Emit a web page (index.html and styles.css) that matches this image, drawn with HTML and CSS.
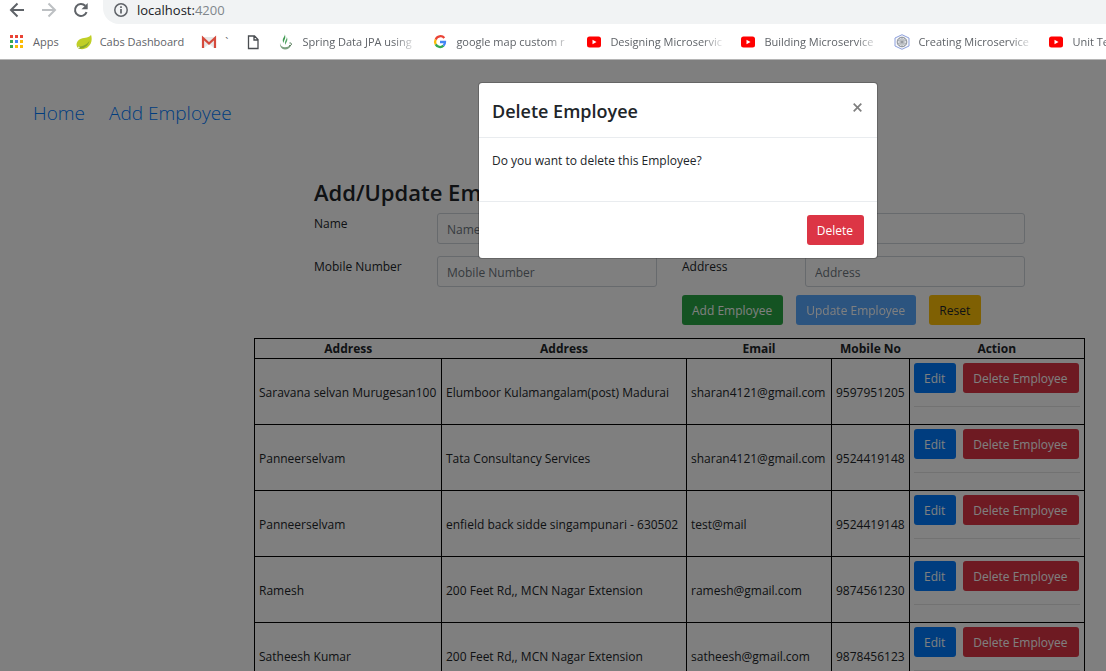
FILE: index.html
```html
<!DOCTYPE html>
<html lang="en">
<head>
<meta charset="utf-8">
<title>Employee Management</title>
<link rel="stylesheet" href="styles.css">
</head>
<body>
<svg class="sprite" aria-hidden="true">
  <symbol id="youtube" viewBox="0 0 16 16"><rect x="1" y="2.500" width="14" height="11" rx="2.500" fill="#f00"/><path d="M6.500 5.800v4.400l4-2.200z" fill="#fff"/></symbol>
</svg>
<div class="browser">
  <header>
    <div class="toolbar">
      <button class="tool" aria-label="Back"><svg width="16" height="16" viewBox="0 0 16 16"><path d="M15 8H2.500M8.500 1.500 2 8l6.500 6.500" fill="none" stroke="#5f6368" stroke-width="2"/></svg></button>
      <button class="tool" aria-label="Forward"><svg width="16" height="16" viewBox="0 0 16 16"><path d="M1 8h12.500M7.500 1.500 14 8l-6.500 6.500" fill="none" stroke="#bdc0c3" stroke-width="2"/></svg></button>
      <button class="tool" aria-label="Reload"><svg width="16" height="16" viewBox="0 0 16 16"><path d="M13.600 10.200A6 6 0 1 1 12.300 3.800" fill="none" stroke="#5f6368" stroke-width="2"/><path d="M14.700 1v6.200H8.500z" fill="#5f6368"/></svg></button>
      <div class="address">
        <svg width="14" height="14" viewBox="0 0 14 14"><circle cx="7" cy="7" r="6.200" fill="none" stroke="#5f6368" stroke-width="1.500"/><path d="M7 6v4.500M7 3.300v1.600" stroke="#5f6368" stroke-width="1.700"/></svg>
        <span class="url">localhost:<span class="port">4200</span></span>
      </div>
    </div>
    <nav class="bookmarks" aria-label="Bookmarks">
      <a class="bookmark" href="#"><svg viewBox="0 0 16 16"><path d="M1 1h3v3H1zM6 1h3v3H6zM11 1h3v3h-3z" fill="#ea4335"/><path d="M1 6h3v3H1zM1 11h3v3H1z" fill="#34a853"/><path d="M6 6h3v3H6z" fill="#4285f4"/><path d="M11 6h3v3h-3zM6 11h3v3H6zM11 11h3v3h-3z" fill="#fbbc05"/></svg><span>Apps</span></a>
      <a class="bookmark" href="#"><svg viewBox="0 0 16 16"><path d="M15 .8C13.500 4 9 3.300 5 4.800.5 6.600-.5 11 1.500 13.500 4 16 9 15.500 12 13c3.500-3 4.500-7.500 3-12.200z" fill="#c0cf26"/><path d="M1.500 12.500C6 12.800 11 11 13.500 6.500 12.500 12.500 7 15 2.500 14.800z" fill="#86a72d"/><circle cx="2.700" cy="13.500" r="1" fill="#eef3d5"/></svg><span>Cabs Dashboard</span></a>
      <a class="bookmark" href="#"><svg viewBox="0 0 16 16"><path d="M1 3h14v11H1z" fill="#e8e8e8"/><path d="M3 14l5-4 5 4z" fill="#fff"/><path d="M2 14V4l6 5.500L14 4v10" fill="none" stroke="#d54b3d" stroke-width="2.200"/></svg><span>`</span></a>
      <a class="bookmark" href="#" aria-label="Untitled page"><svg viewBox="0 0 16 16"><path d="M3.500 2h6l3.500 3.500V14.500H3.500zM9 2v4h4" fill="#fff" stroke="#4a4d51" stroke-width="1.300"/></svg></a>
      <a class="bookmark" href="#"><svg viewBox="0 0 16 16"><path d="M2 9c.3 3 2.500 4.200 5 4.200 2.300 0 3.800-.7 4.700-2.200l1.300.2c-.8 2.600-3 4.300-6 4.300C3.800 15.500 1.500 12.500 2 9z" fill="#7da181"/><path d="M6.800.3C7.300 3 3 4.500 5.600 9.300 5.400 6.500 8.500 4.500 6.800.3z" fill="#3f9a52"/><path d="M8.800 3C9 5.500 6 7 7.300 11 8 8.500 10.400 6.500 8.800 3z" fill="#57a868"/><path d="M11.500 9c3-.4 2.500 2.600-.5 3" fill="none" stroke="#49734e"/></svg><span class="clipped">Spring Data JPA using</span></a>
      <a class="bookmark" href="#"><svg viewBox="0 0 16 16"><path d="M12.300 4A5 5 0 0 0 3.700 5.600" fill="none" stroke="#ea4335" stroke-width="2.300"/><path d="M3.700 5.600a5 5 0 0 0 0 4.800" fill="none" stroke="#fbbc05" stroke-width="2.300"/><path d="M3.700 10.400A5 5 0 0 0 11.500 11.700" fill="none" stroke="#34a853" stroke-width="2.300"/><path d="M8 8h5a5 5 0 0 1-1.500 3.700" fill="none" stroke="#4285f4" stroke-width="2.300"/></svg><span class="clipped">google map custom r</span></a>
      <a class="bookmark" href="#"><svg><use href="#youtube"/></svg><span class="clipped">Designing Microservic</span></a>
      <a class="bookmark" href="#"><svg><use href="#youtube"/></svg><span class="clipped">Building Microservice</span></a>
      <a class="bookmark" href="#"><svg viewBox="0 0 16 16"><path d="M8 .7 15 4v8L8 15.300 1 12V4z" fill="#f6f7fa" stroke="#8da0dc"/><circle cx="8" cy="8" r="4.800" fill="#dcdee1" stroke="#8b9097"/><path d="M8 3v10M3.500 6l9 4M3.500 10l9-4M5 4l3 4 3-4M5 12l3-4 3 4" stroke="#8b9097" stroke-width=".6" fill="none"/></svg><span class="clipped">Creating Microservice</span></a>
      <a class="bookmark" href="#"><svg><use href="#youtube"/></svg><span class="clipped">Unit Te</span></a>
    </nav>
  </header>
  <div class="page">
    <nav class="menu"><a href="#">Home</a><a href="#">Add Employee</a></nav>
    <main>
      <form class="editor">
        <h1>Add/Update Employee</h1>
        <div class="fields">
          <label for="name">Name</label><input id="name" placeholder="Name">
          <label for="email">Email</label><input id="email" type="email" placeholder="Email">
          <label for="mobile">Mobile Number</label><input id="mobile" placeholder="Mobile Number">
          <label for="address">Address</label><input id="address" placeholder="Address">
          <div class="form-actions">
            <button type="button" class="btn success">Add Employee</button>
            <button type="button" class="btn primary" disabled>Update Employee</button>
            <button type="reset" class="btn warning">Reset</button>
          </div>
        </div>
      </form>
      <table>
        <colgroup><col class="c-name"><col class="c-address"><col class="c-email"><col class="c-mobile"><col class="c-action"></colgroup>
        <thead><tr><th>Address</th><th>Address</th><th>Email</th><th>Mobile No</th><th>Action</th></tr></thead>
        <tbody>
          <tr><td>Saravana selvan Murugesan100</td><td>Elumboor Kulamangalam(post) Madurai</td><td>sharan4121@gmail.com</td><td>9597951205</td><td><div class="row-actions"><button class="btn primary">Edit</button><button class="btn danger">Delete Employee</button></div><hr></td></tr>
          <tr><td>Panneerselvam</td><td>Tata Consultancy Services</td><td>sharan4121@gmail.com</td><td>9524419148</td><td><div class="row-actions"><button class="btn primary">Edit</button><button class="btn danger">Delete Employee</button></div><hr></td></tr>
          <tr><td>Panneerselvam</td><td>enfield back sidde singampunari - 630502</td><td>test@mail</td><td>9524419148</td><td><div class="row-actions"><button class="btn primary">Edit</button><button class="btn danger">Delete Employee</button></div><hr></td></tr>
          <tr><td>Ramesh</td><td>200 Feet Rd,, MCN Nagar Extension</td><td>ramesh@gmail.com</td><td>9874561230</td><td><div class="row-actions"><button class="btn primary">Edit</button><button class="btn danger">Delete Employee</button></div><hr></td></tr>
          <tr><td>Satheesh Kumar</td><td>200 Feet Rd,, MCN Nagar Extension</td><td>satheesh@gmail.com</td><td>9878456123</td><td><div class="row-actions"><button class="btn primary">Edit</button><button class="btn danger">Delete Employee</button></div><hr></td></tr>
        </tbody>
      </table>
    </main>
    <div class="backdrop">
      <section class="modal" role="dialog" aria-modal="true" aria-labelledby="modal-title">
        <div class="modal-header"><h2 id="modal-title">Delete Employee</h2><button class="close" aria-label="Close"><svg width="9" height="9" viewBox="0 0 9 9"><path d="M.7.7l7.600 7.600M8.300.7.7 8.300" stroke="#7f7f7f" stroke-width="1.700"/></svg></button></div>
        <div class="modal-body"><p>Do you want to delete this Employee?</p></div>
        <div class="modal-footer"><button class="btn danger">Delete</button></div>
      </section>
    </div>
  </div>
</div>
</body>
</html>
```

FILE: styles.css
```css
* { box-sizing: border-box; }

body {
  margin: 0;
  font: 12px/20px "Open Sans", "Noto Sans", sans-serif;
  color: #212529;
  background: #fff;
}

button, input { font: inherit; }
a { text-decoration: none; }
h1, h2, p { margin: 0; }
svg { display: block; flex: none; }
.sprite { position: absolute; width: 0; height: 0; }

.browser {
  display: flex;
  flex-direction: column;
  height: 100vh;
  overflow: hidden;
}

/* Browser chrome */
.toolbar {
  display: flex;
  height: 24px;
  align-items: flex-start;
  gap: 16px;
  padding-left: 9px;
}
.tool {
  padding: 2px 0 0;
  border: 0;
  background: none;
}
.address {
  display: flex;
  flex: 1;
  align-items: center;
  gap: 9px;
  height: 24px;
  padding: 0 0 4px 11px;
  margin-left: -2px;
  border-radius: 0 0 0 16px;
  background: #f1f3f4;
}
.url { font-size: 13px; color: #202124; }
.port { color: #80868b; }

.bookmarks {
  display: flex;
  align-items: center;
  gap: 17px;
  height: 36px;
  padding-left: 9px;
  overflow: hidden;
  border-bottom: 1px solid #b5b5b5;
}
.bookmark {
  display: flex;
  flex: none;
  align-items: center;
  gap: 8px;
  font-size: 11px;
  color: #5f6368;
}
.bookmark svg { width: 16px; height: 16px; }
.clipped {
  width: 113px;
  overflow: hidden;
  white-space: nowrap;
  mask-image: linear-gradient(to right, #000 92px, transparent 116px);
}

/* Application */
.page {
  position: relative;
  flex: 1;
  min-height: 0;
  overflow: hidden;
}
.menu {
  display: flex;
  gap: 24px;
  padding: 41px 33px 0;
  font-size: 19px;
  line-height: 24px;
  font-weight: 300;
}
.menu a { color: #007bff; }

.editor { margin: 51px 81px 13px 314px; }
h1 {
  font-size: 22px;
  line-height: 32px;
  font-weight: 600;
  padding-bottom: 5px;
}
.fields {
  display: grid;
  grid-template-columns: 98px 1fr 98px 1fr;
  gap: 12px 25px;
}
.fields label { padding-top: 1px; }
.fields input {
  width: 100%;
  min-width: 0;
  height: 31px;
  padding: 5px 9px 3px;
  border: 1px solid #ced4da;
  border-radius: 3px;
  background: #fff;
}
.fields input::placeholder { color: #6c757d; }
.form-actions {
  display: flex;
  grid-column: 3 / 5;
  gap: 13px;
  margin-top: -4px;
}

.btn {
  height: 30px;
  padding: 2px 11px 0 10px;
  border: 0;
  border-radius: 3px;
  color: #fff;
  white-space: nowrap;
}
.primary { background: #007bff; }
.primary:disabled { opacity: .65; }
.success { background: #28a745; }
.warning { background: #ffc107; color: #212529; }
.danger { background: #dc3545; }

table {
  width: calc(100% - 275px);
  margin-left: 254px;
  table-layout: fixed;
  border-collapse: collapse;
  border: 1px solid #000;
}
.c-name { width: 187px; }
.c-address { width: 245px; }
.c-email { width: 145px; }
.c-mobile { width: 78px; }
th {
  height: 20px;
  padding: 1px 0 0;
  font-weight: 700;
  line-height: 18px;
}
td {
  height: 66px;
  padding: 6px 4px 4px;
  border: 1px solid #000;
  white-space: nowrap;
}
td:last-child {
  padding-top: 4px;
  vertical-align: top;
}
.row-actions { display: flex; gap: 7px; }
hr {
  margin: 13px 0 0;
  border: 0;
  border-top: 1px solid rgba(0, 0, 0, .1);
}

/* Dialog */
.backdrop {
  position: absolute;
  inset: 0;
  padding: 22px 0 0 478px;
  background: rgba(0, 0, 0, .5);
}
.modal {
  width: 400px;
  border: 1px solid rgba(0, 0, 0, .2);
  border-radius: 4px;
  background: #fff;
  background-clip: padding-box;
}
.modal-header {
  display: flex;
  justify-content: space-between;
  align-items: flex-start;
  padding: 14px 13px 12px;
  border-bottom: 1px solid #e9ecef;
}
h2 {
  font-size: 18px;
  line-height: 28px;
  font-weight: 600;
}
.close {
  padding: 6px 2px;
  border: 0;
  background: none;
}
.modal-body {
  min-height: 63px;
  padding: 13px;
}
.modal-footer {
  display: flex;
  justify-content: flex-end;
  padding: 13px;
  border-top: 1px solid #e9ecef;
}
```
